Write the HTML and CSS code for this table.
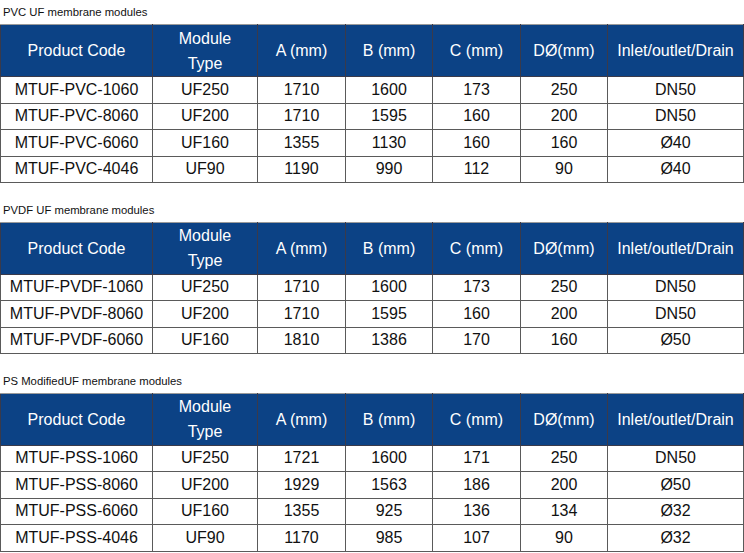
FILE: index.html
```html
<!DOCTYPE html>
<html>
<head>
<meta charset="utf-8">
<link rel="stylesheet" href="styles.css">
</head>
<body>
<section class="block">
  <div class="caption">PVC UF membrane modules</div>
  <table class="spec">
    <colgroup><col class="c1"><col class="c2"><col class="c3"><col class="c4"><col class="c5"><col class="c6"><col class="c7"></colgroup>
    <thead><tr><th>Product Code</th><th class="wrap">Module Type</th><th>A (mm)</th><th>B (mm)</th><th>C (mm)</th><th>DØ(mm)</th><th>Inlet/outlet/Drain</th></tr></thead>
    <tbody>
      <tr><td>MTUF-PVC-1060</td><td>UF250</td><td>1710</td><td>1600</td><td>173</td><td>250</td><td>DN50</td></tr>
      <tr><td>MTUF-PVC-8060</td><td>UF200</td><td>1710</td><td>1595</td><td>160</td><td>200</td><td>DN50</td></tr>
      <tr><td>MTUF-PVC-6060</td><td>UF160</td><td>1355</td><td>1130</td><td>160</td><td>160</td><td>Ø40</td></tr>
      <tr><td>MTUF-PVC-4046</td><td>UF90</td><td>1190</td><td>990</td><td>112</td><td>90</td><td>Ø40</td></tr>
    </tbody>
  </table>
</section>
<section class="block">
  <div class="caption">PVDF UF membrane modules</div>
  <table class="spec">
    <colgroup><col class="c1"><col class="c2"><col class="c3"><col class="c4"><col class="c5"><col class="c6"><col class="c7"></colgroup>
    <thead><tr><th>Product Code</th><th class="wrap">Module Type</th><th>A (mm)</th><th>B (mm)</th><th>C (mm)</th><th>DØ(mm)</th><th>Inlet/outlet/Drain</th></tr></thead>
    <tbody>
      <tr><td>MTUF-PVDF-1060</td><td>UF250</td><td>1710</td><td>1600</td><td>173</td><td>250</td><td>DN50</td></tr>
      <tr><td>MTUF-PVDF-8060</td><td>UF200</td><td>1710</td><td>1595</td><td>160</td><td>200</td><td>DN50</td></tr>
      <tr><td>MTUF-PVDF-6060</td><td>UF160</td><td>1810</td><td>1386</td><td>170</td><td>160</td><td>Ø50</td></tr>
    </tbody>
  </table>
</section>
<section class="block">
  <div class="caption">PS ModifiedUF membrane modules</div>
  <table class="spec">
    <colgroup><col class="c1"><col class="c2"><col class="c3"><col class="c4"><col class="c5"><col class="c6"><col class="c7"></colgroup>
    <thead><tr><th>Product Code</th><th class="wrap">Module Type</th><th>A (mm)</th><th>B (mm)</th><th>C (mm)</th><th>DØ(mm)</th><th>Inlet/outlet/Drain</th></tr></thead>
    <tbody>
      <tr><td>MTUF-PSS-1060</td><td>UF250</td><td>1721</td><td>1600</td><td>171</td><td>250</td><td>DN50</td></tr>
      <tr><td>MTUF-PSS-8060</td><td>UF200</td><td>1929</td><td>1563</td><td>186</td><td>200</td><td>Ø50</td></tr>
      <tr><td>MTUF-PSS-6060</td><td>UF160</td><td>1355</td><td>925</td><td>136</td><td>134</td><td>Ø32</td></tr>
      <tr><td>MTUF-PSS-4046</td><td>UF90</td><td>1170</td><td>985</td><td>107</td><td>90</td><td>Ø32</td></tr>
    </tbody>
  </table>
</section>
</body>
</html>
```
FILE: styles.css
```css
html, body {
  margin: 0;
  padding: 0;
  background: #ffffff;
}
body {
  font-family: "Liberation Sans", Arial, sans-serif;
  color: #111;
}
.block + .block {
  margin-top: 14.5px;
}
.caption {
  font-size: 11.3px;
  line-height: 14px;
  padding: 5px 0 5px 3px;
  color: #111;
}
.spec {
  border-collapse: collapse;
  table-layout: fixed;
  width: 743px;
  font-size: 16px;
}
.c1 { width: 152px; }
.c2 { width: 105px; }
.c3 { width: 88px; }
.c4 { width: 87px; }
.c5 { width: 88px; }
.c6 { width: 87px; }
.c7 { width: 136px; }
.spec thead tr {
  height: 52px;
}
.spec tbody tr {
  height: 26.5px;
}
.spec th {
  background: #0c4285;
  color: #ffffff;
  font-weight: normal;
  line-height: 25px;
  padding: 0 2px;
  border: 1px solid #3a3a4a;
  border-top-color: #9a9a9a;
  text-align: center;
  vertical-align: middle;
}
.spec th.wrap {
  padding: 0 14px;
}
.spec td {
  padding: 0;
  line-height: 20px;
  border: 1px solid #5a5a5a;
  text-align: center;
  vertical-align: middle;
}
```
